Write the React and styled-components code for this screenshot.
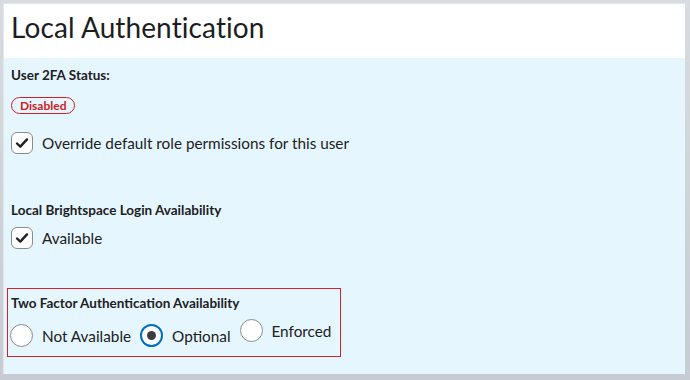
import React from "react";
import styled, { createGlobalStyle } from "styled-components";

const Global = createGlobalStyle`
  html, body { margin: 0; padding: 0; }
  body {
    width: 690px;
    height: 380px;
    overflow: hidden;
    background: #cdd2d7;
    font-family: Lato, "Noto Sans", sans-serif;
    color: #202122;
  }
`;

const Frame = styled.div`
  box-sizing: border-box;
  width: 690px;
  height: 380px;
  padding: 3px 5px 6px 3px;
  display: flex;
  background: linear-gradient(#d8dce0, #c6ccd2);
`;

const Card = styled.div`
  flex: 1;
  display: flex;
  flex-direction: column;
  background: #ffffff;
  border-left: 1px solid #e4e7ea;
  border-top: 1px solid #e4e7ea;
`;

const Header = styled.div`
  height: 54px;
  box-sizing: border-box;
  padding: 6px 0 0 7px;
  background: #ffffff;
`;

const Title = styled.h1`
  margin: 0;
  font-size: 28px;
  font-weight: 400;
  line-height: 34px;
  letter-spacing: 0.1px;
  color: #1c1d1f;
`;

const Panel = styled.div`
  flex: 1;
  background: #e6f6fe;
  padding: 9px 0 0 7px;
  display: flex;
  flex-direction: column;
`;

const Label = styled.div`
  font-size: 13.5px;
  font-weight: 700;
  line-height: 16px;
  color: #202122;
  white-space: nowrap;
  margin-top: ${(p) => p.$mt || 0}px;
`;

const Badge = styled.span`
  align-self: flex-start;
  box-sizing: border-box;
  height: 17px;
  margin-top: 14px;
  padding: 0 8px;
  border: 1px solid #cd2026;
  border-radius: 9px;
  color: #cd2026;
  font-size: 12px;
  font-weight: 700;
  line-height: 15px;
`;

const CheckRow = styled.label`
  display: flex;
  align-items: center;
  gap: 9px;
  margin-top: ${(p) => p.$mt || 0}px;
  font-size: 15.3px;
  line-height: 22px;
  color: #202122;
  white-space: nowrap;
`;

const Box = styled.span`
  box-sizing: border-box;
  width: 22px;
  height: 22px;
  border: 1px solid #868c8f;
  border-radius: 6px;
  background: #ffffff;
  display: flex;
  align-items: center;
  justify-content: center;
  flex: none;
`;

const Highlight = styled.div`
  align-self: flex-start;
  box-sizing: border-box;
  width: 334px;
  height: 69px;
  margin: 39px 0 0 -4px;
  padding: 6px 0 0 2px;
  border: 1.5px solid #d2232a;
  display: flex;
  flex-direction: column;
`;

const HighlightTitle = styled(Label)`
  padding-left: 1px;
`;

const RadioGroup = styled.div`
  display: flex;
  align-items: flex-start;
  gap: 9px;
  margin-top: 8px;
`;

const RadioItem = styled.label`
  display: flex;
  align-items: center;
  gap: 9px;
  margin-top: ${(p) => (p.$raised ? 0 : 5)}px;
  font-size: 15.3px;
  line-height: 22px;
  color: #202122;
  white-space: nowrap;
`;

const Circle = styled.span`
  box-sizing: border-box;
  width: 23px;
  height: 23px;
  border-radius: 50%;
  background: #ffffff;
  border: ${(p) => (p.$checked ? "2px solid #006fbf" : "1px solid #868c8f")};
  display: flex;
  align-items: center;
  justify-content: center;
  flex: none;
  &::after {
    content: "";
    display: ${(p) => (p.$checked ? "block" : "none")};
    width: 9px;
    height: 9px;
    border-radius: 50%;
    background: #3c3f42;
  }
`;

const Check = () => (
  <svg width="14" height="12" viewBox="0 0 14 12">
    <path d="M2 6.5 L5.3 9.6 L12 2.4" fill="none" stroke="#202122" strokeWidth="2.4" strokeLinecap="round" strokeLinejoin="round" />
  </svg>
);

const Checkbox = ({ children, mt }) => (
  <CheckRow $mt={mt}>
    <Box>
      <Check />
    </Box>
    {children}
  </CheckRow>
);

const Radio = ({ children, checked, raised }) => (
  <RadioItem $raised={raised}>
    <Circle $checked={checked} />
    {children}
  </RadioItem>
);

export default function App() {
  return (
    <>
      <Global />
      <Frame>
        <Card>
          <Header>
            <Title>Local Authentication</Title>
          </Header>
          <Panel>
            <Label>User 2FA Status:</Label>
            <Badge>Disabled</Badge>
            <Checkbox mt={18}>Override default role permissions for this user</Checkbox>
            <Label $mt={48}>Local Brightspace Login Availability</Label>
            <Checkbox mt={9}>Available</Checkbox>
            <Highlight>
              <HighlightTitle>Two Factor Authentication Availability</HighlightTitle>
              <RadioGroup>
                <Radio>Not Available</Radio>
                <Radio checked>Optional</Radio>
                <Radio raised>Enforced</Radio>
              </RadioGroup>
            </Highlight>
          </Panel>
        </Card>
      </Frame>
    </>
  );
}
